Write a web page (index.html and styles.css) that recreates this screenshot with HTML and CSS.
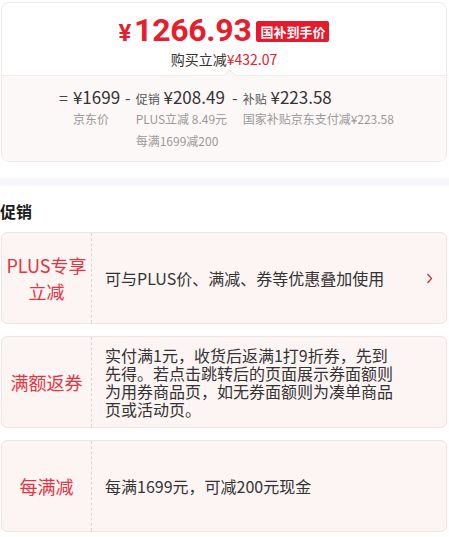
FILE: index.html
```html
<!DOCTYPE html>
<html lang="zh-CN">
<head>
  <meta charset="UTF-8" />
  <meta name="viewport" content="width=device-width, initial-scale=1.0"/>
  <title>到手价</title>
  <link rel="stylesheet" href="styles.css">
</head>
<body>
  <div class="price-card">
    <div class="price-top">
      <div class="final">
        <span class="final-price"><span class="yen">¥</span>1266.93</span>
        <span class="badge">国补到手价</span>
      </div>
      <div class="saving">购买立减<span class="red">¥432.07</span></div>
    </div>
    <div class="price-bottom">
      <div class="breakdown">
        <div class="part">
          <span class="op">=</span>
          <div class="col">
            <div class="val">¥1699</div>
            <div class="note">京东价</div>
          </div>
        </div>
        <div class="part">
          <span class="op">-</span>
          <div class="col">
            <div class="val"><small>促销</small> ¥208.49</div>
            <div class="note">PLUS立减 8.49元</div>
            <div class="note">每满1699减200</div>
          </div>
        </div>
        <div class="part">
          <span class="op">-</span>
          <div class="col">
            <div class="val"><small>补贴</small> ¥223.58</div>
            <div class="note">国家补贴京东支付减¥223.58</div>
          </div>
        </div>
      </div>
    </div>
  </div>

  <div class="band"></div>

  <h2 class="title">促销</h2>

  <div class="promo">
    <div class="promo-label">PLUS专享<br>立减</div>
    <div class="promo-text">可与PLUS价、满减、券等优惠叠加使用</div>
    <div class="promo-arrow">
      <svg width="7" height="11" viewBox="0 0 7 11"><polyline points="1.5,1 5.5,5.5 1.5,10" fill="none" stroke="#c8303c" stroke-width="1.3"/></svg>
    </div>
  </div>

  <div class="promo">
    <div class="promo-label">满额返券</div>
    <div class="promo-text">实付满1元，收货后返满1打9折券，先到先得。若点击跳转后的页面展示券面额则为用券商品页，如无券面额则为凑单商品页或活动页。</div>
    <div class="promo-arrow"></div>
  </div>

  <div class="promo">
    <div class="promo-label">每满减</div>
    <div class="promo-text">每满1699元，可减200元现金</div>
    <div class="promo-arrow"></div>
  </div>
</body>
</html>
```
FILE: styles.css
```css
body {
  margin: 0;
  font-family: "Noto Sans CJK SC", "Noto Sans", sans-serif;
  background: #fff;
  color: #333;
}
.price-card {
  margin: 2px 2px 0 1px;
  border: 1px solid #efe8e8;
  border-radius: 8px;
  overflow: hidden;
}
.price-top {
  padding: 10px 0 6px;
  text-align: center;
}
.final {
  display: flex;
  justify-content: center;
  align-items: center;
  height: 37px;
}
.final-price {
  color: #e4202c;
  font-family: Roboto, "Noto Sans CJK SC", sans-serif;
  font-size: 32px;
  font-weight: 700;
  line-height: 37px;
  letter-spacing: -0.3px;
}
.yen {
  font-size: 24px;
  margin-right: 3px;
}
.badge {
  margin-left: 5px;
  background: #e8192c;
  color: #fff;
  font-size: 13px;
  font-weight: 700;
  line-height: 21px;
  padding: 0 4px;
  border-radius: 2px;
}
.saving {
  font-size: 14px;
  line-height: 19px;
  color: #333;
}
.red {
  color: #e4202c;
}
.price-bottom {
  position: relative;
  background: #fdf8f8;
  border-top: 1px solid #f3eaea;
  padding: 10px 0 9px;
}
.price-bottom::before {
  content: "";
  position: absolute;
  left: 224px;
  top: -5px;
  width: 7px;
  height: 7px;
  background: #fdf8f8;
  border-top: 1px solid #f3eaea;
  border-left: 1px solid #f3eaea;
  transform: rotate(45deg);
}
.breakdown {
  display: flex;
  justify-content: center;
}
.part {
  display: flex;
  align-items: flex-start;
}
.op {
  font-size: 16px;
  line-height: 22px;
  margin: 0 5px;
  color: #444;
}
.val {
  font-size: 17px;
  line-height: 22px;
  color: #333;
  white-space: nowrap;
}
.val small {
  font-size: 12px;
  line-height: 1;
  color: #555;
}
.note {
  font-size: 12px;
  line-height: 22px;
  color: #999;
  white-space: nowrap;
}
.band {
  height: 8px;
  background: #f6f6fb;
  margin-top: 16px;
}
.title {
  margin: 0;
  padding: 14px 0 10px;
  font-size: 16px;
  line-height: 22px;
  font-weight: 700;
  color: #1a1a1a;
}
.promo {
  display: flex;
  margin: 0 2px 12px 1px;
  height: 92px;
  box-sizing: border-box;
  border: 1px solid #efe4e4;
  border-radius: 6px;
  background: #fdf4f4;
}
.promo-label {
  width: 89px;
  flex: none;
  border-right: 1px dashed #dcd4d4;
  display: flex;
  align-items: center;
  justify-content: center;
  text-align: center;
  color: #e2353f;
  font-size: 18px;
  line-height: 26px;
}
.promo-text {
  flex: 1;
  display: flex;
  align-items: center;
  padding-left: 13px;
  font-size: 16px;
  line-height: 18px;
  color: #333;
}
.promo-arrow {
  width: 48px;
  flex: none;
  display: flex;
  align-items: center;
  justify-content: flex-end;
  padding-right: 13px;
  box-sizing: border-box;
}
```
